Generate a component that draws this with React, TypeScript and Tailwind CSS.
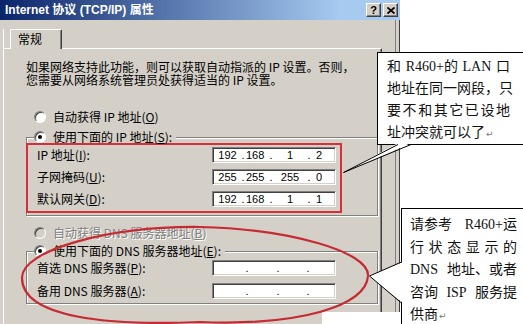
import type { ReactNode } from "react";

const IP_CELLS = [27, 4, 24, 4, 34, 4, 24];
const DNS_CELLS = [31, 4, 27, 4, 26, 4, 24];

function Radio({ checked, disabled }: { checked?: boolean; disabled?: boolean }) {
  return (
    <span
      className={`flex h-[12px] w-[12px] shrink-0 items-center justify-center rounded-full border border-t-[#808080] border-l-[#808080] border-b-white border-r-white shadow-[inset_1px_1px_0_#404040] ${
        disabled ? "bg-[#d4d0c8]" : "bg-white"
      }`}
    >
      {checked && <span className="h-[4px] w-[4px] rounded-full bg-black" />}
    </span>
  );
}

function Key({ k }: { k: string }) {
  return (
    <>
      (<span className="underline underline-offset-1">{k}</span>)
    </>
  );
}

function IpField({ values, cells }: { values: string[]; cells: number[] }) {
  return (
    <div className="flex h-[16px] w-[124px] items-center border border-t-[#808080] border-l-[#808080] border-b-white border-r-white bg-white pl-[1px] font-['Liberation_Sans',sans-serif] text-[11px] leading-[12px] shadow-[inset_1px_1px_0_#404040,inset_-1px_-1px_0_#d4d0c8]">
      {cells.map((w, i) => {
        const isDot = i % 2 === 1;
        const seg = isDot ? "." : values[i / 2] ?? "";
        const align = isDot ? "justify-center" : i === 2 ? "justify-start pl-[1px]" : i === 6 ? "justify-start pl-[5px]" : "justify-center";
        return (
          <span key={i} className={`flex ${align}`} style={{ width: w }}>
            {seg}
          </span>
        );
      })}
    </div>
  );
}

function GroupHeader({ children }: { children: ReactNode }) {
  return (
    <div className="flex h-[12px] items-start">
      <div className="mt-[6px] h-[6px] w-[8px] border-l border-t border-[#808080] shadow-[inset_1px_1px_0_#fff]" />
      <div className="flex h-[12px] items-center gap-[7px] pr-[4px] leading-[12px]">{children}</div>
      <div className="mt-[6px] h-[6px] flex-1 border-r border-t border-[#808080] shadow-[inset_0_1px_0_#fff,1px_0_0_#fff]" />
    </div>
  );
}

function FieldRow({ label, children }: { label: ReactNode; children: ReactNode }) {
  return (
    <div className="flex h-[16px] items-center">
      <div className="w-[175px] leading-[12px]">{label}</div>
      {children}
    </div>
  );
}

// Word-style justified line: spaces take the slack when there are any,
// otherwise the characters are spread out.
function Line({ text, last, children }: { text?: string; last?: boolean; children?: ReactNode }) {
  if (last) return <div className="whitespace-nowrap">{children ?? text}</div>;
  const parts = (text ?? "").split(" ");
  if (parts.length > 1) {
    return (
      <div className="flex justify-between whitespace-nowrap">
        {parts.map((p, i) => (
          <span key={i}>{p}</span>
        ))}
      </div>
    );
  }
  return <div className="whitespace-nowrap text-justify [text-align-last:justify]">{text}</div>;
}

function Ret() {
  return <span className="ml-[1px] font-['DejaVu_Sans',sans-serif] text-[9px] text-[#777]">↵</span>;
}

export default function App() {
  return (
    <div className="relative h-[324px] w-[523px] overflow-hidden bg-white font-['Noto_Sans_CJK_SC','Liberation_Sans',sans-serif] text-[12px] text-black">
      <div className="flex h-[324px] w-[400px] flex-col bg-[#d4d0c8]">
        {/* Title bar */}
        <div className="flex h-[20px] shrink-0 items-center bg-[linear-gradient(to_right,#0a246a,#a6caf0_340px)] pl-[5px] pr-[2px]">
          <span className="font-['Liberation_Sans','Noto_Sans_CJK_SC',sans-serif] text-[12px] font-bold leading-[14px] text-white">
            Internet 协议 (TCP/IP) 属性
          </span>
          <div className="ml-auto flex gap-[2px]">
            <div className="flex h-[14px] w-[15px] items-center justify-center border border-t-white border-l-white border-b-[#404040] border-r-[#404040] bg-[#d4d0c8] font-['Liberation_Sans',sans-serif] text-[11px] font-bold leading-[11px] shadow-[inset_-1px_-1px_0_#808080]">
              ?
            </div>
            <div className="flex h-[14px] w-[15px] items-center justify-center border border-t-white border-l-white border-b-[#404040] border-r-[#404040] bg-[#d4d0c8] shadow-[inset_-1px_-1px_0_#808080]">
              <svg width="8" height="7" viewBox="0 0 8 7">
                <path d="M0.5 0.5 L7.5 6.5 M7.5 0.5 L0.5 6.5" stroke="#000" strokeWidth="1.8" />
              </svg>
            </div>
          </div>
        </div>

        <div className="flex flex-1">
          {/* Main column */}
          <div className="flex w-[395px] flex-col pl-[3px] pt-[9px]">
            <div className="flex flex-1 flex-col border-l border-white">
              {/* Tab */}
              <div className="relative z-10 -mb-px ml-[6px] h-[20px] w-[52px] rounded-t-[2px] border-l border-r border-t border-l-white border-t-white border-r-[#404040] bg-[#d4d0c8] pl-[7px] pt-[1px] text-[12px] leading-[16px] shadow-[inset_-1px_0_0_#808080]">
                常规
              </div>

              {/* Panel */}
              <div className="flex w-[378px] flex-1 flex-col border-r border-t border-r-[#404040] border-t-white pl-[22px] pt-[11px] shadow-[inset_-1px_0_0_#808080]">
                <div className="whitespace-nowrap leading-[13px]">
                  <div>如果网络支持此功能，则可以获取自动指派的 IP 设置。否则，</div>
                  <div>您需要从网络系统管理员处获得适当的 IP 设置。</div>
                </div>

                <div className="mt-[23px] flex h-[16px] items-center gap-[7px] pl-[8px] leading-[12px]">
                  <Radio />
                  <span>
                    自动获得 IP 地址<Key k="O" />
                  </span>
                </div>

                {/* IP group */}
                <div className="mt-[6px] w-[352px]">
                  <GroupHeader>
                    <Radio checked />
                    <span>
                      使用下面的 IP 地址<Key k="S" />:
                    </span>
                  </GroupHeader>
                  <div className="border-x border-b border-[#808080] pb-[2px] shadow-[inset_1px_0_0_#fff,1px_1px_0_#fff]">
                    <div className="-ml-px flex w-[316px] flex-col gap-[6px] border-2 border-[#d3303c] pb-[4px] pl-[9px] pt-[2px]">
                      <FieldRow
                        label={
                          <>
                            IP 地址<Key k="I" />:
                          </>
                        }
                      >
                        <IpField values={["192", "168", "1", "2"]} cells={IP_CELLS} />
                      </FieldRow>
                      <FieldRow
                        label={
                          <>
                            子网掩码<Key k="U" />:
                          </>
                        }
                      >
                        <IpField values={["255", "255", "255", "0"]} cells={IP_CELLS} />
                      </FieldRow>
                      <FieldRow
                        label={
                          <>
                            默认网关<Key k="D" />:
                          </>
                        }
                      >
                        <IpField values={["192", "168", "1", "1"]} cells={IP_CELLS} />
                      </FieldRow>
                    </div>
                  </div>
                </div>

                <div className="mt-[9px] flex h-[16px] items-center gap-[7px] pl-[8px] leading-[12px]">
                  <Radio disabled />
                  <span className="text-[#808080] [text-shadow:1px_1px_0_#fff]">
                    自动获得 DNS 服务器地址<Key k="B" />
                  </span>
                </div>

                {/* DNS group */}
                <div className="mt-[4px] w-[352px]">
                  <GroupHeader>
                    <Radio checked />
                    <span>
                      使用下面的 DNS 服务器地址<Key k="E" />:
                    </span>
                  </GroupHeader>
                  <div className="flex flex-col gap-[7px] border-x border-b border-[#808080] pb-[4px] pl-[10px] pt-[3px] shadow-[inset_1px_0_0_#fff,1px_1px_0_#fff]">
                    <FieldRow
                      label={
                        <>
                          首选 DNS 服务器<Key k="P" />:
                        </>
                      }
                    >
                      <IpField values={["", "", "", ""]} cells={DNS_CELLS} />
                    </FieldRow>
                    <FieldRow
                      label={
                        <>
                          备用 DNS 服务器<Key k="A" />:
                        </>
                      }
                    >
                      <IpField values={["", "", "", ""]} cells={DNS_CELLS} />
                    </FieldRow>
                  </div>
                </div>
              </div>
            </div>
          </div>
          {/* Right frame */}
          <div className="w-px bg-[#808080]" />
          <div className="w-[3px]" />
          <div className="w-px bg-[#404040]" />
        </div>
      </div>

      {/* Document page below the dialog */}
      <div className="absolute left-[322px] top-[312px] h-[12px] w-[201px] bg-white" />
      <div className="absolute left-[418px] top-[306px] h-[24px] w-[50px] bg-[radial-gradient(closest-side,#f7dc7a,transparent)] opacity-70" />

      {/* Callout 1 */}
      <div className="absolute left-[377px] top-[52px] h-[93px] w-[160px] border border-r-0 border-black bg-white pl-[9px] pt-[3px] font-['Liberation_Serif','Noto_Sans_CJK_SC',serif] text-[14px] leading-[22px] text-[#111]">
        <div className="w-[123px]">
          <Line text="和 R460+的 LAN 口" />
          <Line text="地址在同一网段，只" />
          <Line text="要不和其它已设地" />
          <Line last>
            址冲突就可以了
            <Ret />
          </Line>
        </div>
      </div>

      {/* Callout 2 */}
      <div className="absolute left-[401px] top-[208px] h-[120px] w-[130px] border-l border-t border-black bg-white pl-[8px] pt-[5px] font-['Liberation_Serif','Noto_Sans_CJK_SC',serif] text-[14px] leading-[22.5px] text-[#111]">
        <div className="w-[107px]">
          <Line text="请参考 R460+运" />
          <Line text="行状态显示的" />
          <Line text="DNS 地址、或者" />
          <Line text="咨询 ISP 服务提" />
          <Line last>
            供商
            <Ret />
          </Line>
        </div>
      </div>

      {/* Annotation strokes */}
      <svg className="pointer-events-none absolute left-0 top-0" width={523} height={324} viewBox="0 0 523 324">
        <path
          d="M200 227 C290 229 370 252 368 276 C366 306 300 326 200 322 C110 326 22 318 22 278 C21 250 110 226 200 227 Z"
          fill="none"
          stroke="#c62a32"
          strokeWidth={2.2}
        />
        <polygon points="398,143 343,173 411,143" fill="#fff" />
        <polyline points="398,144.5 343.5,172.5 411,144.5" fill="none" stroke="#000" strokeWidth={1} />
        <polygon points="403,262 369,276 403,303" fill="#fff" />
        <polyline points="401.5,262 369.5,276 401.5,303" fill="none" stroke="#000" strokeWidth={1} />
      </svg>
    </div>
  );
}
